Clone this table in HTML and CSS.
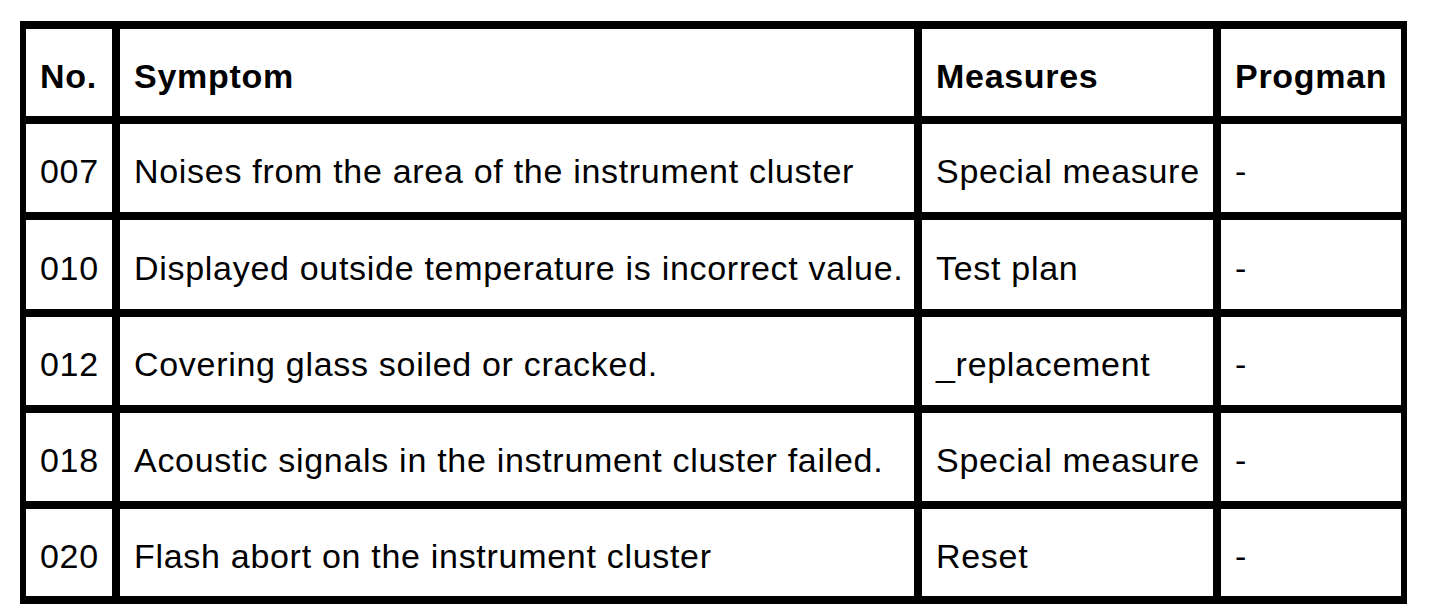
FILE: index.html
```html
<!DOCTYPE html>
<html lang="en">
<head>
<meta charset="utf-8">
<title>Symptoms</title>
<link rel="stylesheet" href="styles.css">
</head>
<body>
<div class="table">
  <div class="cell head">No.</div>
  <div class="cell head">Symptom</div>
  <div class="cell head">Measures</div>
  <div class="cell head">Progman</div>

  <div class="cell">007</div>
  <div class="cell">Noises from the area of the instrument cluster</div>
  <div class="cell">Special measure</div>
  <div class="cell">-</div>

  <div class="cell">010</div>
  <div class="cell">Displayed outside temperature is incorrect value.</div>
  <div class="cell">Test plan</div>
  <div class="cell">-</div>

  <div class="cell">012</div>
  <div class="cell">Covering glass soiled or cracked.</div>
  <div class="cell">_replacement</div>
  <div class="cell">-</div>

  <div class="cell">018</div>
  <div class="cell">Acoustic signals in the instrument cluster failed.</div>
  <div class="cell">Special measure</div>
  <div class="cell">-</div>

  <div class="cell">020</div>
  <div class="cell">Flash abort on the instrument cluster</div>
  <div class="cell">Reset</div>
  <div class="cell">-</div>
</div>
</body>
</html>
```

FILE: styles.css
```css
html, body {
  margin: 0;
  padding: 0;
  background: #ffffff;
}

body {
  padding: 21px 0 0 20px;
  font-family: "Liberation Sans", Arial, sans-serif;
  color: #000000;
}

.table {
  display: grid;
  width: max-content;
  grid-template-columns: 86px 794px 291px 180px;
  grid-template-rows: 87px 88px 89px 88px 88px 87px;
  gap: 8px;
  padding: 8px 6px;
  background: #000000;
}

.cell {
  background: #ffffff;
  display: flex;
  align-items: center;
  padding: 7px 0 0 14px;
  box-sizing: border-box;
  font-size: 34px;
  letter-spacing: 0.7px;
  white-space: nowrap;
}

.head {
  font-weight: bold;
}
```
